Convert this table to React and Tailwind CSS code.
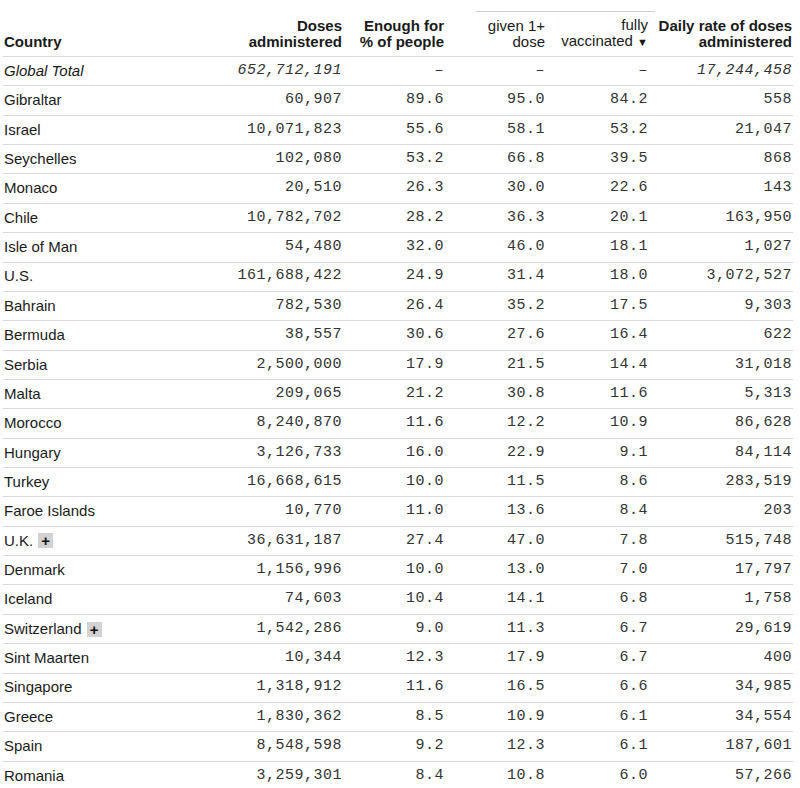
import React from "react";

const rows = [
  ["Gibraltar", "60,907", "89.6", "95.0", "84.2", "558"],
  ["Israel", "10,071,823", "55.6", "58.1", "53.2", "21,047"],
  ["Seychelles", "102,080", "53.2", "66.8", "39.5", "868"],
  ["Monaco", "20,510", "26.3", "30.0", "22.6", "143"],
  ["Chile", "10,782,702", "28.2", "36.3", "20.1", "163,950"],
  ["Isle of Man", "54,480", "32.0", "46.0", "18.1", "1,027"],
  ["U.S.", "161,688,422", "24.9", "31.4", "18.0", "3,072,527"],
  ["Bahrain", "782,530", "26.4", "35.2", "17.5", "9,303"],
  ["Bermuda", "38,557", "30.6", "27.6", "16.4", "622"],
  ["Serbia", "2,500,000", "17.9", "21.5", "14.4", "31,018"],
  ["Malta", "209,065", "21.2", "30.8", "11.6", "5,313"],
  ["Morocco", "8,240,870", "11.6", "12.2", "10.9", "86,628"],
  ["Hungary", "3,126,733", "16.0", "22.9", "9.1", "84,114"],
  ["Turkey", "16,668,615", "10.0", "11.5", "8.6", "283,519"],
  ["Faroe Islands", "10,770", "11.0", "13.6", "8.4", "203"],
  ["U.K.", "36,631,187", "27.4", "47.0", "7.8", "515,748", true],
  ["Denmark", "1,156,996", "10.0", "13.0", "7.0", "17,797"],
  ["Iceland", "74,603", "10.4", "14.1", "6.8", "1,758"],
  ["Switzerland", "1,542,286", "9.0", "11.3", "6.7", "29,619", true],
  ["Sint Maarten", "10,344", "12.3", "17.9", "6.7", "400"],
  ["Singapore", "1,318,912", "11.6", "16.5", "6.6", "34,985"],
  ["Greece", "1,830,362", "8.5", "10.9", "6.1", "34,554"],
  ["Spain", "8,548,598", "9.2", "12.3", "6.1", "187,601"],
  ["Romania", "3,259,301", "8.4", "10.8", "6.0", "57,266"],
];

const widths = ["w-[197px]", "w-[143px]", "w-[102px]", "w-[101px]", "w-[103px]", "w-[144px]"];

function Num({ w, children, italic }) {
  return (
    <div
      className={`${w} shrink-0 pr-[1px] text-right font-['Liberation_Mono',monospace] text-[15px] tracking-[0.5px] text-[#333] ${italic ? "italic" : ""}`}
    >
      {children}
    </div>
  );
}

function Row({ r, italic }) {
  return (
    <div className="flex h-[29.36px] items-center border-t border-[#d9d9d9]">
      <div
        className={`${widths[0]} shrink-0 pl-[1px] flex items-center text-[15px] text-[#1a1a1a] ${italic ? "italic" : ""}`}
      >
        {r[0]}
        {r[6] && (
          <span className="ml-[5px] inline-flex h-[15px] w-[15px] items-center justify-center bg-[#d2d2d2] text-[15px] font-bold leading-none text-[#111]">
            +
          </span>
        )}
      </div>
      {r.slice(1, 6).map((v, i) => (
        <Num key={i} w={widths[i + 1]} italic={italic}>
          {v}
        </Num>
      ))}
    </div>
  );
}

export default function App() {
  return (
    <div className="h-[788px] w-[800px] overflow-hidden bg-white font-['Liberation_Sans',Arial,sans-serif]">
      <div className="ml-[3px] w-[790px]">
        <div className="flex pt-[11px]">
          <div className="w-[473px] shrink-0" />
          <div className="h-px w-[179px] bg-[#cfcfcf]" />
        </div>
        <div className="flex h-[44px] items-end pb-[6px] text-[15px] leading-[16px] text-[#1a1a1a]">
          <div className={`${widths[0]} shrink-0 pl-[1px] font-bold`}>Country</div>
          <div className={`${widths[1]} shrink-0 pr-[1px] text-right font-bold`}>
            Doses
            <br />
            administered
          </div>
          <div className={`${widths[2]} shrink-0 pr-[1px] text-right font-bold`}>
            Enough for
            <br />
            % of people
          </div>
          <div className={`${widths[3]} shrink-0 pr-[1px] text-right`}>
            given 1+
            <br />
            dose
          </div>
          <div className={`${widths[4]} shrink-0 pr-[1px] text-right`}>
            fully
            <br />
            vaccinated <span className="text-[11px]">▼</span>
          </div>
          <div className={`${widths[5]} shrink-0 pr-[1px] text-right font-bold`}>
            Daily rate of doses
            <br />
            administered
          </div>
        </div>
        <Row r={["Global Total", "652,712,191", "–", "–", "–", "17,244,458"]} italic />
        {rows.map((r) => (
          <Row key={r[0]} r={r} />
        ))}
      </div>
    </div>
  );
}
